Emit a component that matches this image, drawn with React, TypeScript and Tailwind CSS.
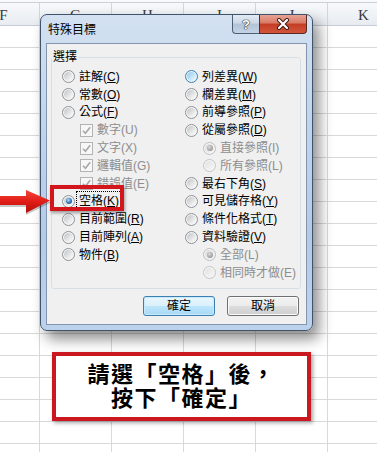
import type { ReactNode } from 'react'

const cols = ['F', 'G', 'H', 'I', 'J', 'K']
const sheetRows = Array.from({ length: 20 }, (_, i) => i)

type RadioState = 'off' | 'on' | 'hot' | 'dis' | 'dison'

type Item = {
  label: string
  key: string
  kind: 'radio' | 'check'
  state?: RadioState
  sub?: boolean
  focus?: boolean
}

const leftItems: Item[] = [
  { label: '註解', key: 'C', kind: 'radio' },
  { label: '常數', key: 'O', kind: 'radio' },
  { label: '公式', key: 'F', kind: 'radio' },
  { label: '數字', key: 'U', kind: 'check', sub: true },
  { label: '文字', key: 'X', kind: 'check', sub: true },
  { label: '邏輯值', key: 'G', kind: 'check', sub: true },
  { label: '錯誤值', key: 'E', kind: 'check', sub: true },
  { label: '空格', key: 'K', kind: 'radio', state: 'on', focus: true },
  { label: '目前範圍', key: 'R', kind: 'radio' },
  { label: '目前陣列', key: 'A', kind: 'radio' },
  { label: '物件', key: 'B', kind: 'radio' },
]

const rightItems: Item[] = [
  { label: '列差異', key: 'W', kind: 'radio', state: 'hot' },
  { label: '欄差異', key: 'M', kind: 'radio' },
  { label: '前導參照', key: 'P', kind: 'radio' },
  { label: '從屬參照', key: 'D', kind: 'radio' },
  { label: '直接參照', key: 'I', kind: 'radio', state: 'dison', sub: true },
  { label: '所有參照', key: 'L', kind: 'radio', state: 'dis', sub: true },
  { label: '最右下角', key: 'S', kind: 'radio' },
  { label: '可見儲存格', key: 'Y', kind: 'radio' },
  { label: '條件化格式', key: 'T', kind: 'radio' },
  { label: '資料驗證', key: 'V', kind: 'radio' },
  { label: '全部', key: 'L', kind: 'radio', state: 'dison', sub: true },
  { label: '相同時才做', key: 'E', kind: 'radio', state: 'dis', sub: true },
]

const radioOuter: Record<RadioState, string> = {
  off: 'border-[#8e9297] bg-[#f5f5f5]',
  on: 'border-[#8e9297] bg-[#f5f5f5]',
  hot: 'border-[#3c7fb1] bg-[#e8f4fc]',
  dis: 'border-[#c4c4c4] bg-[#f6f6f6]',
  dison: 'border-[#bdbdbd] bg-[#f6f6f6]',
}

const radioInner: Record<RadioState, string> = {
  off: 'bg-[linear-gradient(135deg,#bfc2c5,#eeeeee_70%,#fafafa)]',
  on: 'bg-[linear-gradient(135deg,#bfc2c5,#eeeeee_70%,#fafafa)]',
  hot: 'bg-[linear-gradient(135deg,#8ec6ee,#d6ecfb_70%,#f2f9fe)]',
  dis: 'bg-[linear-gradient(135deg,#e2e2e2,#f6f6f6)]',
  dison: 'bg-[linear-gradient(135deg,#dadada,#f4f4f4)]',
}

function Radio({ state = 'off' }: { state?: RadioState }) {
  return (
    <span
      className={`w-[13px] h-[13px] shrink-0 rounded-full border flex items-center justify-center ${radioOuter[state]}`}
    >
      <span className={`w-[9px] h-[9px] rounded-full flex items-center justify-center ${radioInner[state]}`}>
        {state === 'on' && (
          <span className="w-[6px] h-[6px] rounded-full bg-[radial-gradient(circle_at_40%_35%,#bfe6ff,#3a82c4_45%,#163f6b)]" />
        )}
        {state === 'dison' && (
          <span className="w-[6px] h-[6px] rounded-full bg-[radial-gradient(circle_at_40%_35%,#dcdcdc,#a4a4a4_60%,#8c8c8c)]" />
        )}
      </span>
    </span>
  )
}

function Check() {
  return (
    <span className="w-[13px] h-[13px] shrink-0 border border-[#b3b3b3] bg-[#f7f7f7] flex items-center justify-center">
      <svg width="11" height="11" viewBox="0 0 11 11">
        <path d="M2 5.8 L4.4 8.3 L9.2 2.2" fill="none" stroke="#a8a8a8" strokeWidth="1.6" />
      </svg>
    </span>
  )
}

function Row({ item }: { item: Item }) {
  const disabled = item.kind === 'check' || item.state === 'dis' || item.state === 'dison'
  return (
    <div className={`h-[17.8px] flex items-center gap-[4px] ${item.sub ? 'pl-[18px]' : ''}`}>
      {item.kind === 'check' ? <Check /> : <Radio state={item.state} />}
      <span
        className={`text-[12px] leading-[14px] whitespace-nowrap ${disabled ? 'text-[#8d8d8d]' : 'text-black'} ${
          item.focus ? 'outline-1 outline-dotted outline-black outline-offset-[2px]' : ''
        }`}
      >
        {item.label}(
        {disabled ? item.key : <span className="underline underline-offset-1">{item.key}</span>})
      </span>
    </div>
  )
}

function Button({ children, primary }: { children: ReactNode; primary?: boolean }) {
  return (
    <div
      className={`w-[72px] h-[20px] rounded-[3px] border flex items-center justify-center text-[12px] text-black ${
        primary
          ? 'border-[#3c7fb1] bg-[linear-gradient(to_bottom,#eaf6fd,#d9f0fc_50%,#bee6fd_50%,#a7d9f5)] shadow-[inset_0_0_0_1px_#c7ebfd]'
          : 'border-[#707070] bg-[linear-gradient(to_bottom,#f2f2f2,#ebebeb_50%,#dddddd_50%,#cfcfcf)] shadow-[inset_0_0_0_1px_#fbfbfb]'
      }`}
    >
      {children}
    </div>
  )
}

function Sheet() {
  return (
    <div className="flex flex-col">
      <div className="h-[3px] bg-[#f7f9fb] border-b border-[#c9d0d9]" />
      <div className="flex -ml-[32px] h-[23px] bg-[linear-gradient(to_bottom,#f7f9fb,#e8ecf1)] border-b border-[#c5ccd5]">
        {cols.map((c) => (
          <div
            key={c}
            className="w-[72px] shrink-0 border-r border-[#d0d6de] flex items-center justify-center pt-[2px] text-[15px] text-[#3a3a3a] font-['Liberation_Serif',serif]"
          >
            {c}
          </div>
        ))}
      </div>
      {sheetRows.map((r) => (
        <div key={r} className="flex -ml-[32px] h-[22px]">
          {cols.map((c) => (
            <div key={c} className="w-[72px] shrink-0 border-r border-b border-[#d9d9d9]" />
          ))}
        </div>
      ))}
    </div>
  )
}

function Dialog() {
  return (
    <div className="absolute left-[40px] top-[14px] w-[273px] h-[317px] rounded-[7px] border border-[#3f536c] bg-[linear-gradient(to_bottom,#d3e1f1,#c0d4ec_35%,#b4cbe8_70%,#bcd2ec)] shadow-[6px_8px_14px_rgba(0,0,0,0.45)] flex flex-col">
      <div className="h-[28px] flex items-start justify-between">
        <span className="pl-[7px] pt-[8px] text-[12px] leading-[14px] text-black">特殊目標</span>
        <div className="flex mr-[5px]">
          <div className="w-[27px] h-[19px] rounded-bl-[4px] border border-t-0 border-r-0 border-[#4e5f75] bg-[linear-gradient(to_bottom,#e3eaf3,#ccd8e6_45%,#b2c3d6_50%,#c3d3e4)] flex items-center justify-center text-[13px] font-bold leading-none text-white [text-shadow:0_0_1px_#1e2a38,0_0_1px_#1e2a38,0_0_1px_#1e2a38]">
            ?
          </div>
          <div className="w-[48px] h-[19px] rounded-br-[4px] border border-t-0 border-[#5a2a22] bg-[linear-gradient(to_bottom,#e8a394,#d87a66_45%,#c33c24_50%,#d2563c)] flex items-center justify-center">
            <svg width="16" height="12" viewBox="0 0 16 12">
              <path d="M4 2 L12 10 M12 2 L4 10" stroke="#3b1712" strokeWidth="4" strokeLinecap="round" />
              <path d="M4 2 L12 10 M12 2 L4 10" stroke="#ffffff" strokeWidth="2.2" strokeLinecap="round" />
            </svg>
          </div>
        </div>
      </div>
      <div className="mx-[5px] mb-[5px] flex-1 border border-[#8496ae] bg-[#f0f0f0] flex flex-col">
        <fieldset className="mt-[5px] ml-[4px] mr-[5px] border border-[#d5dfe5] rounded-[3px] pb-[6px]">
          <legend className="px-[1px] text-[12px] leading-[16px] text-black">選擇</legend>
          <div className="flex pt-[3px] pl-[10px]">
            <div className="w-[123px] shrink-0 flex flex-col">
              {leftItems.map((it) => (
                <Row key={it.label} item={it} />
              ))}
            </div>
            <div className="flex flex-col">
              {rightItems.map((it) => (
                <Row key={it.label} item={it} />
              ))}
            </div>
          </div>
        </fieldset>
        <div className="mt-auto mb-[8px] pr-[7px] flex justify-end gap-[12px]">
          <Button primary>確定</Button>
          <Button>取消</Button>
        </div>
      </div>
    </div>
  )
}

export default function App() {
  return (
    <div className="relative w-[377px] h-[452px] overflow-hidden bg-white font-['Liberation_Sans','Noto_Sans_CJK_TC',sans-serif]">
      <Sheet />
      <Dialog />

      {/* red callout marks */}
      <div className="absolute left-[50px] top-[185px] w-[74px] h-[26px] border-[4px] border-[#d3161c] shadow-[1px_2px_3px_rgba(0,0,0,0.35)]" />
      <svg className="absolute left-0 top-[186px]" width="54" height="32" viewBox="0 0 54 32">
        <defs>
          <linearGradient id="arrowRed" x1="0" y1="0" x2="0" y2="1">
            <stop offset="0" stopColor="#f4463a" />
            <stop offset="0.5" stopColor="#e01d16" />
            <stop offset="1" stopColor="#b10f0d" />
          </linearGradient>
        </defs>
        <path d="M0 12 L26 12 L26 6 L51 16.5 L26 29 L26 21 L0 21 Z" fill="#000" opacity="0.22" />
        <path d="M0 10 L26 10 L26 4 L50 14.5 L26 27 L26 19 L0 19 Z" fill="url(#arrowRed)" />
      </svg>

      <div className="absolute left-[52px] top-[352px] w-[259px] h-[69px] border-[4px] border-[#c9181f] bg-white shadow-[2px_2px_4px_rgba(0,0,0,0.35)] flex flex-col items-center justify-center text-[22px] leading-[24px] font-bold tracking-[1.5px] text-black">
        <span>請選「空格」後，</span>
        <span>按下「確定」</span>
      </div>
    </div>
  )
}
